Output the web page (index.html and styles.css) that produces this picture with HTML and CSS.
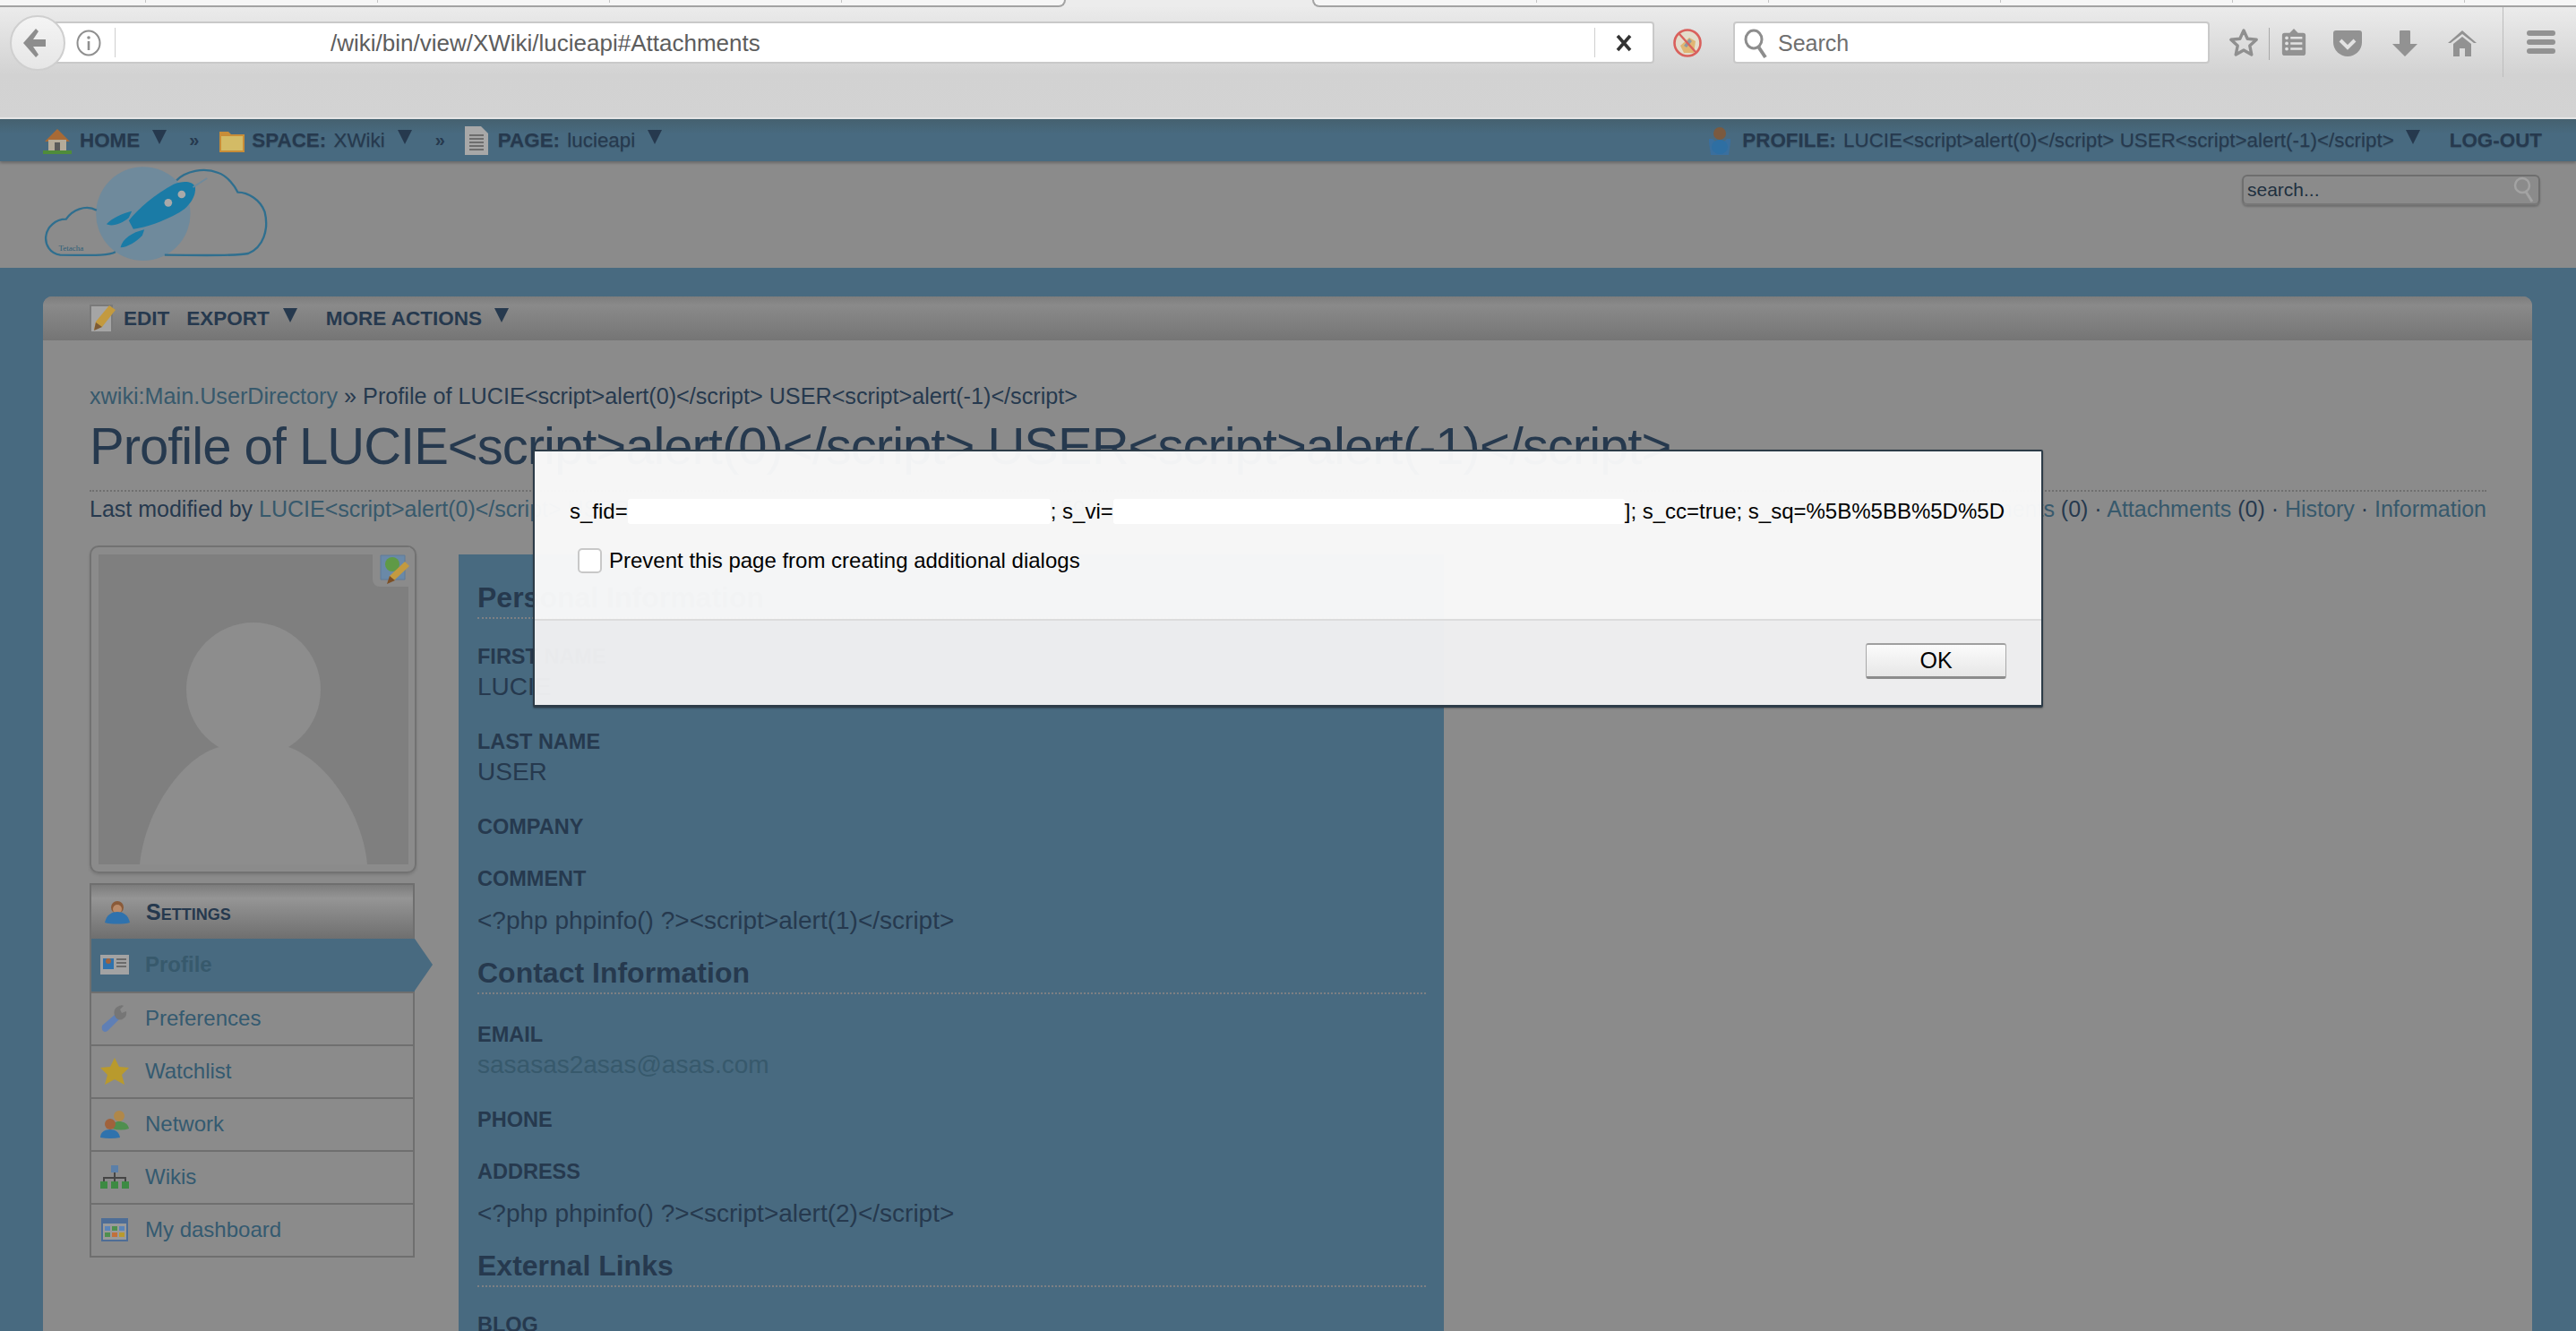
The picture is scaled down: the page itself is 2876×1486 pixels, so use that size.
FILE: index.html
```html
<!DOCTYPE html>
<html lang="en">
<head>
<meta charset="utf-8">
<title>Profile of LUCIE</title>
<link rel="stylesheet" href="styles.css">
</head>
<body>
<div class="tabstrip">
  <div class="tab tab-left"></div>
  <div class="tab tab-right"></div>
</div>
<div class="toolbar">
  <div class="back">
    <svg width="30" height="32" viewBox="0 0 30 32"><path d="M16 0 2 16l14 16 3-3-6-9h14v-8H13l6-9z" fill="#8d8d8d"/></svg>
  </div>
  <div class="urlbar">
    <svg class="info" width="28" height="30" viewBox="0 0 28 30"><ellipse cx="14" cy="15" rx="12.500" ry="13.500" fill="none" stroke="#8f8f8f" stroke-width="2"/><circle cx="14" cy="9" r="1.800" fill="#8f8f8f"/><path d="M14 13v10" stroke="#8f8f8f" stroke-width="2.600"/></svg>
    <span class="urltext">/wiki/bin/view/XWiki/lucieapi#Attachments</span>
    <span class="stop">
      <svg width="20" height="20" viewBox="0 0 20 20"><path d="M3 2l14 16M17 2 3 18" stroke="#333" stroke-width="3.600"/></svg>
    </span>
  </div>
  <svg class="blocked" width="32" height="34" viewBox="0 0 32 34"><circle cx="16" cy="17" r="14.500" fill="#e3dccb" stroke="#d9605c" stroke-width="2.600"/><path d="M8 20l10-9 7 4-2 13H12z" fill="#e0b673"/><path d="M12 20l6-8 3 3-6 7z" fill="#8b9aa3"/><path d="M7 7l18 20" stroke="#d9605c" stroke-width="2.400"/></svg>
  <div class="searchbar">
    <svg width="30" height="34" viewBox="0 0 30 34"><ellipse cx="12" cy="12" rx="9" ry="10" fill="none" stroke="#8d8d8d" stroke-width="3"/><path d="M17 20l8 12" stroke="#8d8d8d" stroke-width="4"/></svg>
    <span>Search</span>
  </div>
  <div class="tools">
    <svg class="star" width="34" height="34" viewBox="0 0 34 34"><path d="M17 3l4.200 9.200 10 1.100-7.400 6.800 2 9.900-8.800-5-8.800 5 2-9.900-7.400-6.800 10-1.100z" fill="none" stroke="#8f8f8f" stroke-width="3.400" stroke-linejoin="round"/></svg>
    <span class="toolsep"></span>
    <svg class="clip" width="28" height="30" viewBox="0 0 28 32"><path d="M3 5h6l5-5 5 5h6a3 3 0 0 1 3 3v21a3 3 0 0 1-3 3H3a3 3 0 0 1-3-3V8a3 3 0 0 1 3-3z" fill="#929292"/><path d="M10 11h14M10 17.500h14M10 24h14" stroke="#e2e2e2" stroke-width="2.600"/><circle cx="5.500" cy="11" r="2" fill="#e2e2e2"/><circle cx="5.500" cy="17.500" r="2" fill="#e2e2e2"/><circle cx="5.500" cy="24" r="2" fill="#e2e2e2"/></svg>
    <svg class="pocket" width="32" height="29" viewBox="0 0 32 29"><path d="M3 0h26a3 3 0 0 1 3 3v10a16 16 0 0 1-32 0V3a3 3 0 0 1 3-3z" fill="#929292"/><path d="M8 11l8 8 8-8" fill="none" stroke="#e2e2e2" stroke-width="4"/></svg>
    <svg class="down" width="28" height="29" viewBox="0 0 28 29"><path d="M8 1a1 1 0 0 1 1-1h10a1 1 0 0 1 1 1v14h8L14 29 0 15h8z" fill="#929292"/></svg>
    <svg class="home" width="32" height="29" viewBox="0 0 32 29"><path d="M16 0 32 14h-3L16 4 3 14H0z" fill="#929292"/><path d="M16 7l10 8v14h-7v-9h-6v9H6V15z" fill="#929292"/></svg>
    <span class="toolsep-tall"></span>
    <div class="burger"><i></i><i></i><i></i></div>
  </div>
</div>

<div class="topbar">
  <svg class="nav-icon" width="32" height="32" viewBox="0 0 32 32"><path d="M2 17 16 3l14 14z" fill="#a86a35"/><path d="M6 15h20v13H6z" fill="#b5ab99"/><path d="M13 18h6v10h-6z" fill="#5a5a5a"/><path d="M0 27h32v4H0z" fill="#4f8c3a"/></svg>
  <span class="nav-b nav-home">HOME</span><span class="caret nav-c1"></span>
  <span class="raquo">»</span>
  <svg class="nav-icon nav-folder" width="28" height="26" viewBox="0 0 28 26"><path d="M0 3h10l3 3h15v20H0z" fill="#c88d38"/><path d="M2 8h24v16H2z" fill="#d3bb66"/></svg>
  <span class="nav-b nav-space">SPACE: <span class="nav-n">XWiki</span></span><span class="caret nav-c2"></span>
  <span class="raquo raquo2">»</span>
  <svg class="nav-icon nav-doc" width="26" height="32" viewBox="0 0 26 32"><path d="M0 0h18l8 8v24H0z" fill="#a8a8a8"/><path d="M5 10h16M5 14h16M5 18h16M5 22h16M5 26h16" stroke="#6d6d6d" stroke-width="2"/></svg>
  <span class="nav-b nav-page">PAGE: <span class="nav-n">lucieapi</span></span><span class="caret nav-c3"></span>
  <span class="spacer"></span>
  <svg class="nav-person" width="28" height="32" viewBox="0 0 28 32"><circle cx="14" cy="8" r="7" fill="#7b5a3f"/><path d="M2 14h4l3 3h10l3-3h4v4l-2 14H4L2 18z" fill="#3a6f9e"/><ellipse cx="14" cy="23" rx="9" ry="8" fill="#2e6fa3"/></svg>
  <span class="nav-b nav-profile">PROFILE: <span class="nav-n nav-user">LUCIE&lt;script&gt;alert(0)&lt;/script&gt; USER&lt;script&gt;alert(-1)&lt;/script&gt;</span></span><span class="caret nav-c4"></span>
  <span class="nav-b nav-logout">LOG-OUT</span>
</div>

<div class="header">
  <svg class="logo" width="257" height="110" viewBox="50 160 770 330">
    <ellipse cx="388" cy="327" rx="158" ry="157" fill="#6f8a9c"/>
    <path d="M500 215C530 185 590 170 640 190 670 200 695 235 705 255 740 255 780 280 795 320 810 380 790 440 740 460 700 470 550 465 460 465" fill="none" stroke="#2f6f8f" stroke-width="7"/>
    <path d="M295 455C270 470 200 465 110 465 75 460 60 430 62 405 65 370 95 345 130 345 150 315 195 295 232 315" fill="none" stroke="#2f6f8f" stroke-width="7"/>
    <path d="M340 350C370 310 430 260 490 228 520 216 552 216 562 236 567 270 540 305 510 322 450 355 400 372 355 378z" fill="#1a7ba6"/>
    <path d="M265 362C285 340 320 325 350 318L340 340C320 358 285 372 265 362zM312 440C320 410 350 390 392 380L385 400C365 420 335 440 312 440z" fill="#1a7ba6"/>
    <circle cx="517" cy="262" r="13" fill="#a9a9a9"/><circle cx="472" cy="290" r="13" fill="#a9a9a9"/>
    <path d="M555 238 602 208" stroke="#6f8a9c" stroke-width="5"/>
    <text x="105" y="452" class="logo-text">Tetacha</text>
  </svg>
  <div class="site-search">
    <span>search...</span>
    <svg width="24" height="32" viewBox="0 0 24 32"><circle cx="10" cy="11" r="8" fill="none" stroke="#a3a3a3" stroke-width="2.500"/><path d="M14 18l7 11" stroke="#a3a3a3" stroke-width="3"/></svg>
  </div>
</div>

<div class="main">
  <div class="card">
    <div class="menubar">
      <svg width="30" height="32" viewBox="0 0 30 32"><path d="M1 1h24v30H1z" fill="#a5a5a5" stroke="#7a7a7a" stroke-width="2"/><path d="M5 28l2-9L22 1l7 5-15 19z" fill="#c39a3f"/><path d="M5 29l2-9 7 5z" fill="#7c5a35"/></svg>
      <span class="mb mb-edit">EDIT</span>
      <span class="mb mb-export">EXPORT</span><span class="caret mb-c1"></span>
      <span class="mb mb-more">MORE ACTIONS</span><span class="caret mb-c2"></span>
    </div>
    <div class="content">
      <div class="crumbs"><a>xwiki:Main.UserDirectory</a> » Profile of LUCIE&lt;script&gt;alert(0)&lt;/script&gt; USER&lt;script&gt;alert(-1)&lt;/script&gt;</div>
      <h1 class="title">Profile of LUCIE&lt;script&gt;alert(0)&lt;/script&gt; USER&lt;script&gt;alert(-1)&lt;/script&gt;</h1>
      <div class="meta">
        <div>Last modified by <a>LUCIE&lt;script&gt;alert(0)&lt;/script&gt; USER&lt;script&gt;alert(-1)&lt;/script&gt;</a> on 2017/05/26 09:59</div>
        <div><a>Comments</a> (0) · <a>Attachments</a> (0) · <a>History</a> · <a>Information</a></div>
      </div>
      <div class="columns">
        <div class="side">
          <div class="avatar">
            <div class="avatar-img">
              <svg width="346" height="346" viewBox="0 0 346 346"><circle cx="173" cy="151" r="75" fill="#8d8d8d"/><path d="M46 346C52 285 95 225 135 215H212C255 230 295 290 300 346z" fill="#8d8d8d"/></svg>
              <div class="avatar-edit">
                <svg width="34" height="34" viewBox="0 0 34 34"><path d="M1 1h27v27H1z" fill="#6a89a8" stroke="#5f7b99"/><circle cx="14" cy="11" r="8" fill="#5f9a46"/><path d="M9 32l2-8L28 8l5 5-17 16z" fill="#c39a3f"/><path d="M8 33l3-9 6 5z" fill="#7c4f26"/></svg>
              </div>
            </div>
          </div>
          <nav class="menu">
            <div class="menu-head">
              <svg width="28" height="28" viewBox="0 0 28 28"><circle cx="14" cy="9" r="7" fill="#8a5a38"/><circle cx="14" cy="11" r="5" fill="#b98a68"/><path d="M0 26c2-9 8-12 14-12s12 3 14 12c-6 2-22 2-28 0z" fill="#2f72ad"/></svg>
              <span>Settings</span>
            </div>
            <a class="menu-item active">
              <svg width="32" height="22" viewBox="0 0 32 22"><path d="M0 0h32v22H0z" fill="#a3a3a3"/><path d="M3 4h12v12H3z" fill="#2f72ad"/><circle cx="9" cy="7" r="3" fill="#a0623c"/><path d="M18 5h11M18 9h11M18 13h11" stroke="#6b6b6b" stroke-width="2"/></svg>
              <span>Profile</span>
            </a>
            <a class="menu-item">
              <svg width="32" height="32" viewBox="0 0 32 32"><path d="M2 24 16 12l5 5L8 30q-3 2-5 0t-1-6z" fill="#5f7fb5"/><path d="M16 13q-2-7 3-10t7-1l-4 4 2 4 5-2q1 5-3 8t-8 0z" fill="#767676"/></svg>
              <span>Preferences</span>
            </a>
            <a class="menu-item">
              <svg width="32" height="32" viewBox="0 0 32 32"><path d="M16 1l5 10 11 1-8 8 3 11-11-6-11 6 3-11-8-8 11-1z" fill="#b99a2d"/></svg>
              <span>Watchlist</span>
            </a>
            <a class="menu-item">
              <svg width="32" height="32" viewBox="0 0 32 32"><circle cx="21" cy="7" r="6" fill="#b0884a"/><path d="M13 21c0-6 4-8 8-8s10 2 11 8q-9 3-19 0z" fill="#4f8f4f"/><circle cx="11" cy="16" r="6" fill="#a0623c"/><path d="M0 31c0-6 5-9 11-9s10 3 11 9q-11 2-22 0z" fill="#2f72ad"/></svg>
              <span>Network</span>
            </a>
            <a class="menu-item">
              <svg width="32" height="26" viewBox="0 0 32 26"><path d="M12 0h8v8h-8z" fill="#5b7fa8"/><path d="M16 8v6M4 18v-4h24v4M16 14v4" fill="none" stroke="#454545" stroke-width="2"/><path d="M0 18h8v8H0zM12 18h8v8h-8zM24 18h8v8h-8z" fill="#3d8a43"/></svg>
              <span>Wikis</span>
            </a>
            <a class="menu-item">
              <svg width="30" height="26" viewBox="0 0 30 26"><path d="M0 0h30v26H0z" fill="#4e6d96"/><path d="M2 6h26v18H2z" fill="#9a9a9a"/><path d="M4 9h6v5H4z" fill="#5b84b8"/><path d="M12 9h6v5h-6z" fill="#4e8f4e"/><path d="M20 9h6v5h-6z" fill="#5b84b8"/><path d="M4 16h6v5H4z" fill="#4e8f4e"/><path d="M12 16h6v5h-6z" fill="#c2703a"/><path d="M20 16h6v5h-6z" fill="#b99a2d"/></svg>
              <span>My dashboard</span>
            </a>
          </nav>
        </div>
        <section class="panel">
          <h2>Personal Information</h2>
          <dl class="dl-first">
            <dt>FIRST NAME</dt><dd>LUCIE</dd>
            <dt>LAST NAME</dt><dd>USER</dd>
            <dt>COMPANY</dt><dd class="empty"></dd>
            <dt>COMMENT</dt><dd class="para">&lt;?php phpinfo() ?&gt;&lt;script&gt;alert(1)&lt;/script&gt;</dd>
          </dl>
          <h2>Contact Information</h2>
          <dl>
            <dt>EMAIL</dt><dd class="mail">sasasas2asas@asas.com</dd>
            <dt>PHONE</dt><dd class="empty"></dd>
            <dt>ADDRESS</dt><dd class="para">&lt;?php phpinfo() ?&gt;&lt;script&gt;alert(2)&lt;/script&gt;</dd>
          </dl>
          <h2>External Links</h2>
          <dl class="dl-last">
            <dt>BLOG</dt>
          </dl>
        </section>
      </div>
    </div>
  </div>
</div>

<div class="dialog">
  <div class="dialog-body">
    <div class="cookie"><span>s_fid=</span><i class="blob blob1"></i><span>; s_vi=</span><i class="blob blob2"></i><span>]; s_cc=true; s_sq=%5B%5BB%5D%5D</span></div>
    <label class="prevent"><span class="check"></span>Prevent this page from creating additional dialogs</label>
  </div>
  <div class="dialog-foot">
    <button class="ok">OK</button>
  </div>
</div>
</body>
</html>
```
FILE: styles.css
```css
* { box-sizing: border-box; }
html, body { margin: 0; padding: 0; }
body {
  width: 2876px;
  height: 1486px;
  overflow: hidden;
  position: relative;
  display: flex;
  flex-direction: column;
  font-family: "Liberation Sans", Arial, sans-serif;
  color: #26394e;
  background: #8b8b8b;
}

/* browser chrome */
.tabstrip {
  height: 8px;
  flex: none;
  background: #ececec;
  position: relative;
  display: flex;
  justify-content: space-between;
  overflow: hidden;
}
.tab {
  height: 8px;
  background-color: #f6f6f6;
  background-image: linear-gradient(90deg, transparent 258px, #c4c4c4 258px);
  background-size: 259px 3px;
  background-repeat: repeat-x;
  border-bottom: 2px solid #a3a3a3;
}
.tab-left { width: 1190px; border-right: 2px solid #a3a3a3; border-bottom-right-radius: 8px; background-position: 163px 0; }
.tab-right { width: 1411px; border-left: 2px solid #a3a3a3; border-bottom-left-radius: 8px; background-position: 249px 0; }
.toolbar {
  height: 125px;
  flex: none;
  display: flex;
  align-items: flex-start;
  padding: 9px 0 0 11px;
  background: linear-gradient(#ebebeb 0, #d2d2d2 62%, #d3d3d3 100%);
  border-bottom: 2px solid #e6e6e6;
}
.back {
  width: 62px;
  height: 62px;
  flex: none;
  border-radius: 50%;
  background: linear-gradient(#f4f4f4, #e6e6e6);
  border: 2px solid #cfcfcf;
  display: flex;
  align-items: center;
  justify-content: center;
  position: relative;
  z-index: 2;
  padding-right: 6px;
}
.urlbar {
  width: 1787px;
  height: 47px;
  flex: none;
  margin: 7px 0 0 -13px;
  background: #fff;
  border: 2px solid #c9c9c9;
  border-radius: 0 4px 4px 0;
  display: flex;
  align-items: center;
  padding-left: 23px;
}
.info { flex: none; }
.urltext {
  flex: 1;
  margin-left: 15px;
  padding-left: 240px;
  border-left: 1px solid #cfcfcf;
  height: 33px;
  line-height: 35px;
  font-size: 26px;
  color: #5d5d5d;
  white-space: nowrap;
}
.stop {
  width: 65px;
  height: 33px;
  flex: none;
  border-left: 1px solid #cfcfcf;
  display: flex;
  align-items: center;
  justify-content: center;
}
.blocked { flex: none; margin: 14px 0 0 21px; }
.searchbar {
  width: 532px;
  height: 47px;
  flex: none;
  margin: 7px 0 0 35px;
  background: #fff;
  border: 2px solid #c9c9c9;
  border-radius: 4px;
  display: flex;
  align-items: center;
  gap: 9px;
  padding: 2px 0 0 9px;
  font-size: 25px;
  color: #6f6f6f;
}
.tools { display: flex; align-items: flex-start; flex: none; margin-left: 21px; }
.star { margin-top: 14px; }
.toolsep { width: 1px; height: 36px; background: #a9a9a9; margin: 14px 0 0 11px; }
.clip { margin: 15px 0 0 13px; }
.pocket { margin: 17px 0 0 30px; }
.down { margin: 17px 0 0 34px; }
.home { margin: 17px 0 0 34px; }
.toolsep-tall { width: 1px; height: 78px; background: #bdbdbd; margin: -9px 0 0 29px; }
.burger { margin: 17px 0 0 26px; display: flex; flex-direction: column; gap: 4px; }
.burger i { display: block; width: 32px; height: 6px; border-radius: 3px; background: #929292; }

/* site top bar */
.topbar {
  height: 47px;
  flex: none;
  background: linear-gradient(#45616f 0, #486a80 35%, #486a80 100%);
  display: flex;
  align-items: center;
  font-size: 22.4px;
  box-shadow: 0 2px 3px rgba(0,0,0,.25);
  position: relative;
  z-index: 1;
  white-space: nowrap;
}
.nav-icon { flex: none; margin-left: 48px; }
.nav-b { font-weight: 700; color: #26394e; text-shadow: 0 1px 1px rgba(0,0,0,.2); }
.nav-n { font-weight: 400; margin-left: 2px; }
.nav-home { margin-left: 9px; }
.caret {
  width: 0;
  height: 0;
  flex: none;
  border-left: 8px solid transparent;
  border-right: 8px solid transparent;
  border-top: 16px solid #26394e;
  margin-top: -8px;
}
.nav-c1 { margin-left: 14px; }
.raquo { margin-left: 25px; font-size: 20px; font-weight: 700; }
.nav-folder { margin-left: 23px; }
.nav-space { margin-left: 8px; }
.nav-c2 { margin-left: 14px; }
.raquo2 { margin-left: 26px; }
.nav-doc { margin-left: 22px; }
.nav-page { margin-left: 11px; }
.nav-c3 { margin-left: 14px; }
.spacer { flex: 1; }
.nav-person { flex: none; }
.nav-profile { margin-left: 11px; }
.nav-c4 { margin-left: 13px; }
.nav-logout { margin: 0 38px 0 33px; }

/* logo row */
.header {
  height: 119px;
  flex: none;
  background: #8b8b8b;
  display: flex;
  justify-content: space-between;
  align-items: flex-start;
  padding: 3px 40px 0 47px;
}
.logo-text { font-family: "Liberation Serif", serif; font-size: 27px; fill: #2f5f78; }
.site-search {
  width: 333px;
  height: 34px;
  margin-top: 12px;
  border: 2px solid #6e6e6e;
  border-bottom-color: #777;
  border-radius: 6px;
  display: flex;
  justify-content: space-between;
  align-items: center;
  padding: 0 4px;
  font-size: 21px;
  color: #20303f;
  box-shadow: 0 2px 2px rgba(0,0,0,.2);
}
.main {
  flex: 1;
  min-height: 0;
  background: #486a80;
  padding: 32px 49px 0 48px;
  display: flex;
  overflow: hidden;
}

/* content card */
.card { flex: 1; background: #8b8b8b; border-radius: 10px 10px 0 0; display: flex; flex-direction: column; }
.menubar {
  height: 49px;
  flex: none;
  background: linear-gradient(#7d7d7d, #8a8a8a 20%, #757575);
  border-radius: 10px 10px 0 0;
  display: flex;
  align-items: center;
  padding-left: 52px;
  font-size: 22.5px;
  font-weight: 700;
  color: #26394e;
}
.mb-edit { margin-left: 8px; }
.mb-export { margin-left: 19px; }
.mb-c1 { margin-left: 15px; }
.mb-more { margin-left: 32px; }
.mb-c2 { margin-left: 14px; }
.content { flex: 1; min-height: 0; padding: 47px 51px 0 52px; }
a { color: #37596c; }
.crumbs { font-size: 25.2px; line-height: 30px; color: #26394e; white-space: nowrap; }
.title {
  margin: 6px 0 0;
  font-size: 58px;
  font-weight: 400;
  line-height: 70px;
  letter-spacing: -1px;
  white-space: nowrap;
  color: #26394e;
  padding-bottom: 14px;
  border-bottom: 2px dotted #6f6f6f;
}
.meta {
  display: flex;
  justify-content: space-between;
  font-size: 25px;
  line-height: 30px;
  margin-top: 4px;
  white-space: nowrap;
}
.columns { display: flex; align-items: flex-start; margin-top: 26px; gap: 46px; }
.side { width: 366px; flex: none; }
.avatar {
  width: 365px;
  height: 366px;
  border: 2px solid #727272;
  border-radius: 10px;
  padding: 8px;
  box-shadow: 0 2px 3px rgba(0,0,0,.12);
}
.avatar-img { width: 346px; height: 346px; background: #7f7f7f; position: relative; overflow: visible; }
.avatar-img svg { display: block; }
.avatar-edit {
  position: absolute;
  top: -8px;
  right: -2px;
  width: 42px;
  height: 44px;
  background: #8b8b8b;
  border-bottom-left-radius: 8px;
  padding: 8px 0 0 8px;
}
.menu { margin-top: 11px; width: 363px; border: 2px solid #6f6f6f; display: block; }
.menu-head {
  height: 60px;
  display: flex;
  align-items: center;
  gap: 18px;
  padding-left: 15px;
  background: linear-gradient(#7c7c7c, #959595 25%, #6f6f6f);
  font-size: 25px;
  font-weight: 700;
  font-variant: small-caps;
  color: #26394e;
}
.menu-item {
  height: 59px;
  display: flex;
  align-items: center;
  gap: 18px;
  padding: 0 0 1px 10px;
  font-size: 24px;
  color: #345a70;
  border-top: 2px solid #6f6f6f;
}
.menu-item svg { width: 32px; flex: none; }
.menu-item.active {
  background: #486a80;
  font-weight: 700;
  color: #37596c;
  position: relative;
  border-top: none;
  margin-right: -2px;
}
.menu-item.active::after {
  content: "";
  position: absolute;
  left: 100%;
  top: 0;
  border-top: 29.5px solid transparent;
  border-bottom: 29.5px solid transparent;
  border-left: 20px solid #486a80;
}
.panel {
  width: 1100px;
  flex: none;
  margin-top: 10px;
  min-height: 1000px;
  background: #486a80;
  padding: 29px 20px 0 21px;
}
.panel h2 {
  margin: 0;
  font-size: 32px;
  line-height: 38px;
  font-weight: 700;
  color: #26394e;
  padding-bottom: 3px;
  border-bottom: 2px dotted #7d8084;
}
.panel dl { margin: 31px 0 0; }
.panel dl.dl-first { margin-top: 28px; }
.panel dl.dl-last { margin-top: 28px; }
.panel dt { font-size: 23.5px; line-height: 28px; font-weight: 700; color: #26394e; }
.panel dd { margin: 5px 0 0; font-size: 28px; line-height: 30px; color: #26394e; padding-bottom: 32px; }
.panel dd.empty { margin: 0; padding: 0; height: 30px; }
.panel dd.para { margin-top: 18px; padding-bottom: 0; margin-bottom: 24px; }
.panel dd.mail { color: #37596c; }

/* alert dialog */
.dialog {
  position: absolute;
  left: 595px;
  top: 502px;
  width: 1686px;
  height: 288px;
  border: 2px solid #2d3c48;
  border-bottom-width: 3px;
  border-radius: 2px;
  display: flex;
  flex-direction: column;
  color: #000;
  font-size: 24px;
  box-shadow: 0 1px 2px rgba(0,0,0,.3);
}
.dialog-body {
  height: 189px;
  flex: none;
  background: rgba(251,251,251,.96);
  padding: 52px 0 0 39px;
  border-bottom: 2px solid #dcdcdc;
}
.cookie { display: flex; align-items: center; height: 30px; white-space: nowrap; }
.blob { display: block; background: #fff; height: 28px; flex: none; border-radius: 3px; }
.blob1 { width: 472px; }
.blob2 { width: 571px; }
.prevent { display: flex; align-items: center; height: 30px; margin: 25px 0 0 9px; white-space: nowrap; }
.check {
  width: 27px;
  height: 28px;
  flex: none;
  background: #fff;
  border: 2px solid #c8c8c8;
  border-radius: 5px;
  margin-right: 8px;
}
.dialog-foot {
  flex: 1;
  background: rgba(241,241,242,.96);
  display: flex;
  justify-content: flex-end;
  align-items: flex-start;
  padding: 25px 39px 0 0;
}
.ok {
  width: 157px;
  height: 40px;
  background: linear-gradient(#fbfbfb, #e7e7e7);
  border: 1px solid #a8a8a8;
  border-top: 2px solid #9f9f9f;
  border-bottom: 3px solid #8c8c8c;
  border-radius: 3px;
  font-family: "Liberation Sans", Arial, sans-serif;
  font-size: 25px;
  color: #000;
  padding: 0;
}
```
